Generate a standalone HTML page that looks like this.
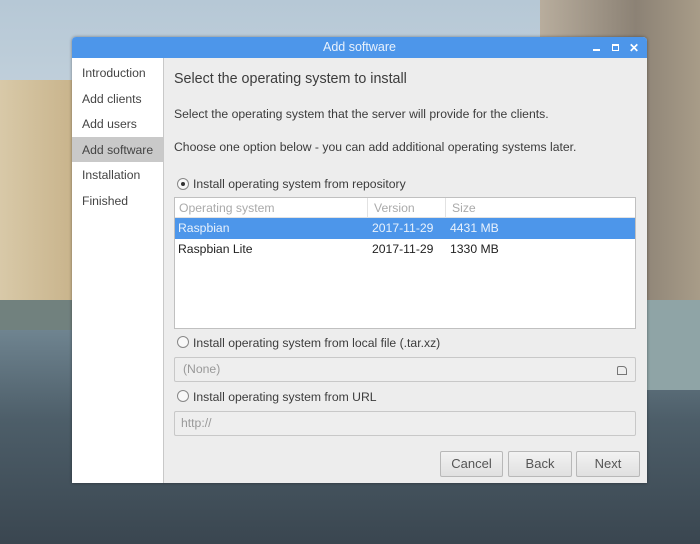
<!DOCTYPE html>
<html><head><style>
*{margin:0;padding:0;box-sizing:border-box}
body{width:700px;height:544px;overflow:hidden;position:relative;font-family:"Liberation Sans",sans-serif;font-size:12.2px;color:#333;
background:linear-gradient(180deg,#b6c8d6 0,#c4d2dc 120px,#a9b8bf 270px,#6f8490 330px,#4d5e69 420px,#3a4650 544px)}
.a{position:absolute}
.win{left:72px;top:37px;width:575px;height:446px;background:#ededed;border-radius:4px 4px 0 0;box-shadow:0 0 3px rgba(0,0,0,.4)}
.title{left:0;top:0;width:575px;height:21px;background:#4d96ea;border-radius:4px 4px 0 0;color:#e8f1fc;text-align:center;line-height:21px;font-size:12.5px}
.side{left:0;top:21px;width:92px;height:425px;background:#fff;border-right:1px solid #c8c8c8;padding-top:2px}
.side div{height:25.6px;line-height:26px;padding-left:10px;color:#444}
.side .sel{background:#c9c9c9}
.t{color:#3c3c3c}
.radio{width:12px;height:12px;border:1px solid #888;border-radius:50%;background:#f8f8f8}
.radio.on::after{content:"";position:absolute;left:3px;top:3px;width:4px;height:4px;border-radius:50%;background:#333}
.entry{border:1px solid #c8c8c8;border-radius:2px;background:#eeeeee;color:#999;padding-left:8px;line-height:23px}
.btn{border:1px solid #b8b8b8;border-radius:2px;background:linear-gradient(#f2f2f2,#e0e0e0);color:#555;text-align:center;line-height:24px;font-size:13px}
</style></head><body>
<div class="a" style="left:0;top:80px;width:72px;height:250px;background:linear-gradient(90deg,#d8c9a8,#c9b48c)"></div>
<div class="a" style="left:0;top:300px;width:72px;height:30px;background:#71817e"></div>
<div class="a" style="left:540px;top:0;width:160px;height:300px;background:linear-gradient(90deg,#b8ad9d,#8c8275 60%,#a89c88)"></div>
<div class="a" style="left:647px;top:300px;width:53px;height:90px;background:#8fa4a6"></div>
<div class="a win">
 <div class="a title">Add software</div>
 <div class="a" style="left:521px;top:12px;width:7px;height:2px;background:#fff"></div>
 <div class="a" style="left:540px;top:7px;width:7px;height:7px;border:1.5px solid #fff;border-top-width:2.5px"></div>
 <div class="a" style="left:557px;top:4px;color:#fff;font-size:12px;font-weight:bold">✕</div>
 <div class="a side">
  <div>Introduction</div><div>Add clients</div><div>Add users</div><div class="sel">Add software</div><div>Installation</div><div>Finished</div>
 </div>
 <div class="a t" style="left:102px;top:34px;font-size:14.3px">Select the operating system to install</div>
 <div class="a t" style="left:102px;top:70px">Select the operating system that the server will provide for the clients.</div>
 <div class="a t" style="left:102px;top:103px">Choose one option below - you can add additional operating systems later.</div>
 <div class="a radio on" style="left:105px;top:141px"></div>
 <div class="a t" style="left:121px;top:140px">Install operating system from repository</div>
 <div class="a" style="left:102px;top:160px;width:462px;height:132px;background:#fff;border:1px solid #c0c0c0">
  <div class="a" style="left:0;top:0;width:460px;height:20px;border-bottom:1px solid #e2e2e2;color:#aaa;line-height:20px">
   <span class="a" style="left:4px">Operating system</span>
   <span class="a" style="left:192px;top:0;height:20px;border-left:1px solid #e2e2e2;padding-left:6px">Version</span>
   <span class="a" style="left:270px;top:0;height:20px;border-left:1px solid #e2e2e2;padding-left:6px">Size</span>
  </div>
  <div class="a" style="left:0;top:20px;width:460px;height:21px;background:#4d96ea;color:#e8f1fc;line-height:21px">
   <span class="a" style="left:3px">Raspbian</span><span class="a" style="left:197px">2017-11-29</span><span class="a" style="left:275px">4431 MB</span>
  </div>
  <div class="a" style="left:0;top:41px;width:460px;height:21px;color:#222;line-height:21px">
   <span class="a" style="left:3px">Raspbian Lite</span><span class="a" style="left:197px">2017-11-29</span><span class="a" style="left:275px">1330 MB</span>
  </div>
 </div>
 <div class="a radio" style="left:105px;top:299px"></div>
 <div class="a t" style="left:121px;top:299px">Install operating system from local file (.tar.xz)</div>
 <div class="a entry" style="left:102px;top:320px;width:462px;height:25px">(None)</div>
 <div class="a" style="left:545px;top:329px;width:10px;height:9px;border:1.5px solid #777;border-radius:2px 4px 0 0"></div>
 <div class="a radio" style="left:105px;top:353px"></div>
 <div class="a t" style="left:121px;top:353px">Install operating system from URL</div>
 <div class="a entry" style="left:102px;top:374px;width:462px;height:25px;padding-left:6px">http://</div>
 <div class="a btn" style="left:368px;top:414px;width:63px;height:26px">Cancel</div>
 <div class="a btn" style="left:436px;top:414px;width:64px;height:26px">Back</div>
 <div class="a btn" style="left:504px;top:414px;width:64px;height:26px">Next</div>
</div>
</body></html>
